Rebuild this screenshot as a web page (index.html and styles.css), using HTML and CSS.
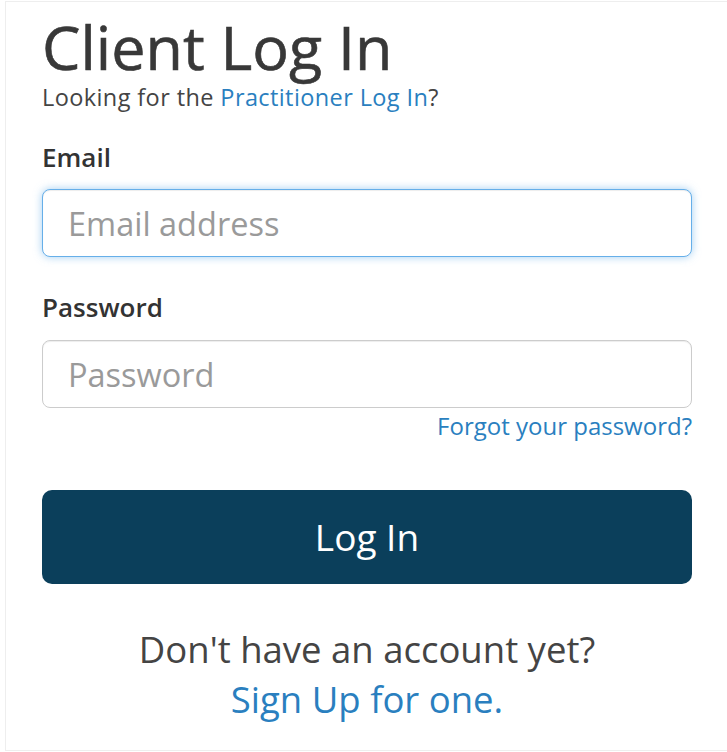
FILE: index.html
```html
<!DOCTYPE html>
<html lang="en">
<head>
<meta charset="utf-8">
<title>Client Log In</title>
<link rel="stylesheet" href="styles.css">
</head>
<body>
<div class="card">
  <h1 class="title">Client Log In</h1>
  <p class="subtitle">Looking for the <a href="#" class="link">Practitioner Log In</a>?</p>
  <form class="form">
    <label class="label" for="email">Email</label>
    <input class="input input-focus" id="email" type="text" placeholder="Email address">
    <label class="label label-pw" for="pw">Password</label>
    <input class="input input-pw" id="pw" type="password" placeholder="Password">
    <div class="forgot-row"><a href="#" class="link forgot">Forgot your password?</a></div>
    <button type="button" class="btn">Log In</button>
  </form>
  <p class="signup">Don't have an account yet?<br><a href="#" class="link">Sign Up for one.</a></p>
</div>
</body>
</html>
```
FILE: styles.css
```css
html, body {
  margin: 0;
  padding: 0;
  background: #fff;
  overflow: hidden;
}
body {
  font-family: "Open Sans", "Liberation Sans", sans-serif;
  color: #333;
}
.card {
  margin: 1px 0 0 5px;
  width: 722px;
  height: 750px;
  border: 1px solid #eeeeee;
  border-right: 0;
  padding: 0 0 0 36px;
  box-sizing: border-box;
}
.title {
  margin: 11px 0 0;
  font-size: 61px;
  font-weight: 400;
  line-height: 68px;
  color: #383838;
  -webkit-text-stroke: 0.6px #383838;
}
.subtitle {
  margin: 2px 0 0;
  font-size: 23.5px;
  letter-spacing: 0.4px;
  line-height: 28px;
  color: #444;
}
.link {
  color: #2a7fbf;
  text-decoration: none;
}
.form {
  width: 650px;
  display: flex;
  flex-direction: column;
}
.label {
  margin-top: 30px;
  font-size: 26px;
  font-weight: 600;
  line-height: 32px;
  color: #333;
}
.label-pw {
  margin-top: 34px;
}
.input {
  margin-top: 16px;
  height: 68px;
  box-sizing: border-box;
  border: 1px solid #cccccc;
  border-radius: 8px;
  padding: 0 25px;
  font-family: inherit;
  font-size: 32.5px;
  color: #555;
  outline: none;
  box-shadow: inset 0 1px 1px rgba(0,0,0,0.075);
}
.input-pw {
  margin-top: 17px;
}
.input::placeholder {
  color: #9a9a9a;
}
.input-focus {
  border-color: #66afe9;
  box-shadow: inset 0 1px 1px rgba(0,0,0,0.075), 0 0 8px rgba(102,175,233,0.6);
}
.forgot-row {
  display: flex;
  justify-content: flex-end;
  margin-top: 3px;
}
.forgot {
  font-size: 24px;
  line-height: 30px;
}
.btn {
  margin-top: 49px;
  height: 94px;
  border: 0;
  border-radius: 10px;
  background: #0b3f5b;
  color: #fff;
  font-family: inherit;
  font-size: 37px;
  line-height: 40px;
}
.signup {
  width: 650px;
  margin: 40px 0 0;
  text-align: center;
  font-size: 36.5px;
  line-height: 50px;
  color: #444;
}
```
